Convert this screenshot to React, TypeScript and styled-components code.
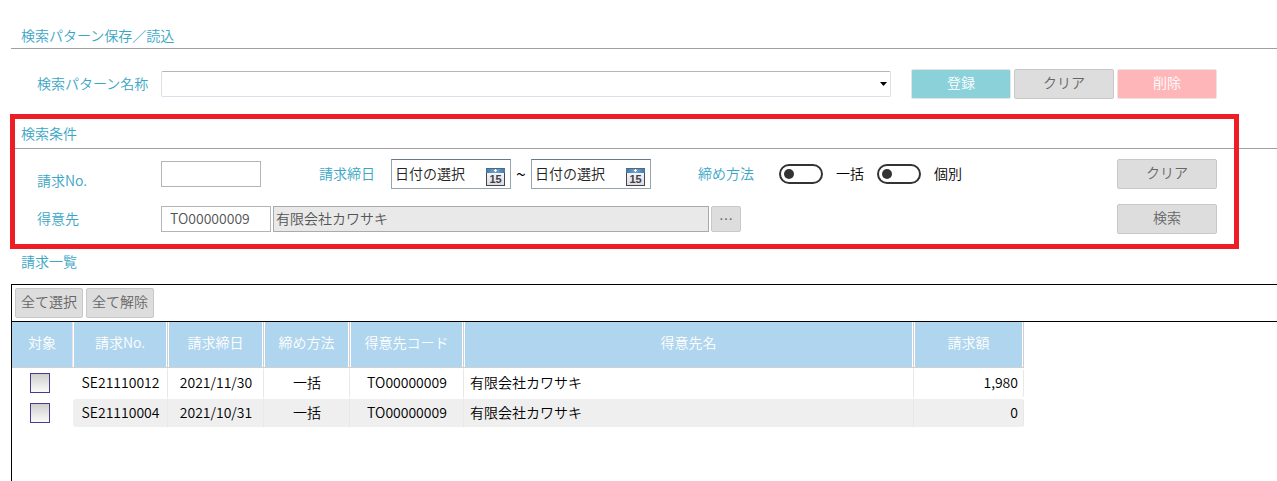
import React from "react";
import styled, { createGlobalStyle, css } from "styled-components";

const GlobalStyle = createGlobalStyle`
  *, *::before, *::after { box-sizing: border-box; }
  body {
    margin: 0;
    background: #fff;
  }
  body, button, input, select {
    font-family: "Noto Sans CJK JP", "Noto Sans", sans-serif;
    font-size: 14px;
    font-weight: 350;
  }
`;

const Page = styled.main`
  display: flex;
  flex-direction: column;
  min-height: 100vh;
  padding: 24px 0 0 11px;
  line-height: 22px;
  color: #000;
`;

const Section = styled.section`
  position: relative;
`;

const Heading = styled.h2<{ $ruled?: boolean; $roomy?: boolean }>`
  margin: 0;
  padding: 0 0 ${(p) => (p.$roomy ? 4 : 2)}px 10px;
  font-size: 14px;
  font-weight: 350;
  line-height: 22px;
  color: #3aa6c6;
  border-bottom: ${(p) => (p.$ruled ? "1px solid #a0a0a0" : "none")};
`;

const Highlight = styled.div`
  position: absolute;
  inset: -8px 38px 1px -1px;
  border: 5px solid #ee1c25;
  pointer-events: none;
`;

const FormRow = styled.div`
  display: flex;
  align-items: center;
  height: 30px;
  padding: 0 60px 0 26px;
`;

const PatternForm = styled.form`
  padding: 20px 0 23px;
`;

const SearchForm = styled.form`
  display: grid;
  gap: 15px;
  padding: 10px 0 16px;
`;

const labelText = css`
  color: #3aa6c6;
  white-space: nowrap;
  flex: none;
`;

const RowLabel = styled.label<{ $low?: boolean }>`
  ${labelText}
  width: 124px;
  padding-bottom: ${(p) => (p.$low ? 0 : 2)}px;
  line-height: 18px;
  align-self: ${(p) => (p.$low ? "flex-end" : "center")};
`;

const GroupLabel = styled.span<{ $width: number }>`
  ${labelText}
  width: ${(p) => p.$width}px;
  padding-bottom: 2px;
`;

const Group = styled.div<{ $before: number }>`
  display: flex;
  align-items: center;
  margin-left: ${(p) => p.$before}px;
`;

const SelectBox = styled.div`
  position: relative;
  flex: 1;
  height: 26px;
  margin-right: 20px;

  svg {
    position: absolute;
    right: 4px;
    top: 11px;
    pointer-events: none;
  }
`;

const Select = styled.select`
  display: block;
  width: 100%;
  height: 26px;
  padding: 0 24px 0 6px;
  appearance: none;
  background: #fff;
  border: 1px solid #dcdfe8;
  border-top-color: #b4b4bc;
  border-radius: 2px;
`;

const TextInput = styled.input<{ $width?: number }>`
  flex: ${(p) => (p.$width ? "none" : "1 1 0")};
  width: ${(p) => p.$width ?? 100}px;
  min-width: 0;
  height: 26px;
  padding: 0 8px 2px;
  color: #555;
  background: #fff;
  border: 1px solid #b4b4b4;

  &:read-only {
    max-width: 436px;
    padding: 0 2px 2px;
    background: #e9e9e9;
    border-color: #a9a9b0;
  }
`;

type Tone = "gray" | "teal" | "pink";

const tones: Record<Tone, [string, string, string]> = {
  gray: ["#dddddd", "#c8c8c8", "#666"],
  teal: ["#8bd1da", "#dfe6e8", "#fff"],
  pink: ["#ffb6b8", "#ece4e4", "#fff"],
};

const Button = styled.button<{ $tone?: Tone; $width?: number; $height?: number }>`
  flex: none;
  width: ${(p) => p.$width ?? 100}px;
  height: ${(p) => p.$height ?? 30}px;
  padding: 0 0 4px;
  line-height: 22px;
  white-space: nowrap;
  background: ${(p) => tones[p.$tone ?? "gray"][0]};
  border: 1px solid ${(p) => tones[p.$tone ?? "gray"][1]};
  border-radius: 2px;
  color: ${(p) => tones[p.$tone ?? "gray"][2]};
`;

const ButtonGroup = styled.div`
  display: flex;
  gap: 3px;
  margin-left: auto;
`;

const Fields = styled.div`
  display: flex;
  flex: 1;
  gap: 2px;
`;

const DateBox = styled.div`
  display: flex;
  align-items: center;
  width: 120px;
  height: 30px;
  padding: 0 5px 0 3px;
  border: 1px solid #96a4b0;
  border-top-color: #66788a;
`;

const DateInput = styled.input`
  flex: 1;
  min-width: 0;
  padding: 0 0 2px;
  border: 0;
  outline: 0;
  background: none;
  color: #222;

  &::placeholder {
    color: #222;
    opacity: 1;
  }
`;

const IconButton = styled.button`
  display: flex;
  padding: 6px 0 0;
  border: 0;
  background: none;
`;

const Tilde = styled.span`
  width: 20px;
  padding-bottom: 2px;
  font-size: 18px;
  text-align: center;
`;

const Switch = styled.label`
  display: flex;
  align-items: center;
  gap: 13px;
  margin-right: 13px;
`;

const SwitchText = styled.span`
  padding-bottom: 2px;
`;

const SwitchInput = styled.input`
  appearance: none;
  width: 44px;
  height: 20px;
  margin: 0;
  padding: 3px;
  border: 2px solid #333;
  border-radius: 10px;

  &::before {
    content: "";
    display: block;
    width: 10px;
    height: 10px;
    border-radius: 50%;
    background: #333;
  }

  &:checked::before {
    margin-left: auto;
  }
`;

const ListPanel = styled.div`
  flex: 1;
  margin-top: 10px;
  border: solid #000;
  border-width: 1px 0 0 1px;
`;

const Toolbar = styled.div`
  display: flex;
  gap: 3px;
  padding: 3px;
  border-bottom: 1px solid #000;
`;

const Table = styled.table`
  width: 1012px;
  table-layout: fixed;
  border-collapse: separate;
  border-spacing: 0;
`;

const HeadCell = styled.th`
  height: 46px;
  padding: 0 0 5px;
  font-weight: 350;
  color: #fff;
  background: #b0d5ee;
  border: solid #d0d0d0;
  border-width: 0 1px 1px 0;
  box-shadow: inset 1px 0 #fff, inset -1px 0 #fff;

  &:first-child {
    border-right-color: #e4e4e8;
    box-shadow: none;
  }
`;

const Cell = styled.td<{ $align?: "left" | "right" }>`
  height: 30px;
  padding: 0 5px 2px 6px;
  text-align: ${(p) => p.$align ?? "center"};
  border: solid transparent;
  border-width: 1px 1px 1px 0;
  border-right-color: #e8e8e8;
  background-clip: padding-box;

  &:first-child {
    padding: 0 5px 0 0;
    border-right-color: transparent;
  }
`;

const Row = styled.tr`
  &:nth-child(even) ${Cell}:not(:first-child) {
    background-color: #efefef;
  }
  ${Cell}:nth-child(2) {
    border-radius: 4px 0 0 4px;
  }
  ${Cell}:last-child {
    border-radius: 0 4px 4px 0;
  }
`;

const CheckBox = styled.input`
  display: block;
  appearance: none;
  width: 20px;
  height: 20px;
  margin: 0 auto;
  border: 1px solid #443c8c;
  background: linear-gradient(#cfcfcf, #fafafa);

  &:checked {
    background: #443c8c;
  }
`;

function CalendarIcon() {
  return (
    <svg width="19" height="18" viewBox="0 0 19 18" aria-hidden="true">
      <defs>
        <linearGradient id="calPage" x1="0" y1="0" x2="0" y2="1">
          <stop offset="0" stopColor="#ffffff" />
          <stop offset="1" stopColor="#dcdce0" />
        </linearGradient>
        <linearGradient id="calTop" x1="0" y1="0" x2="1" y2="0">
          <stop offset="0" stopColor="#3f78ae" />
          <stop offset="0.5" stopColor="#6fa6d6" />
          <stop offset="1" stopColor="#3f78ae" />
        </linearGradient>
      </defs>
      <rect x="0.5" y="0.5" width="18" height="17" fill="url(#calPage)" stroke="#45454d" />
      <rect x="0" y="0" width="19" height="5" fill="url(#calTop)" />
      <path d="M0 .5h19" stroke="#5c6470" />
      <path d="M9.5 1v3M8 2.5h3" stroke="#fff" />
      <text
        x="9.5"
        y="15"
        textAnchor="middle"
        fontFamily="Liberation Sans, sans-serif"
        fontSize="11"
        fontWeight="700"
        fill="#40404a"
      >
        15
      </text>
    </svg>
  );
}

function DateField({ label }: { label: string }) {
  return (
    <DateBox>
      <DateInput type="text" placeholder="日付の選択" aria-label={label} />
      <IconButton type="button" aria-label={label}>
        <CalendarIcon />
      </IconButton>
    </DateBox>
  );
}

const columns = [
  { title: "対象", width: 61 },
  { title: "請求No.", width: 95 },
  { title: "請求締日", width: 96 },
  { title: "締め方法", width: 86 },
  { title: "得意先コード", width: 114 },
  { title: "得意先名", width: 450 },
  { title: "請求額", width: 110 },
];

const invoices = [
  { no: "SE21110012", date: "2021/11/30", method: "一括", code: "TO00000009", name: "有限会社カワサキ", amount: "1,980" },
  { no: "SE21110004", date: "2021/10/31", method: "一括", code: "TO00000009", name: "有限会社カワサキ", amount: "0" },
];

export default function App() {
  return (
    <>
      <GlobalStyle />
      <Page>
        <Section>
          <Heading $ruled>検索パターン保存／読込</Heading>
          <PatternForm>
            <FormRow>
              <RowLabel htmlFor="pattern">検索パターン名称</RowLabel>
              <SelectBox>
                <Select id="pattern" />
                <svg width="7" height="4" viewBox="0 0 7 4" aria-hidden="true">
                  <path d="M0 0h7L3.5 4z" fill="#000" />
                </svg>
              </SelectBox>
              <ButtonGroup>
                <Button type="button" $tone="teal">登録</Button>
                <Button type="button">クリア</Button>
                <Button type="button" $tone="pink">削除</Button>
              </ButtonGroup>
            </FormRow>
          </PatternForm>
        </Section>

        <Section>
          <Heading $ruled $roomy>検索条件</Heading>
          <SearchForm>
            <FormRow>
              <RowLabel htmlFor="invoiceNo" $low>請求No.</RowLabel>
              <TextInput id="invoiceNo" type="text" $width={100} />
              <Group $before={58}>
                <GroupLabel $width={72}>請求締日</GroupLabel>
                <DateField label="請求締日 開始" />
                <Tilde>~</Tilde>
                <DateField label="請求締日 終了" />
              </Group>
              <Group $before={47}>
                <GroupLabel $width={81}>締め方法</GroupLabel>
                <Switch>
                  <SwitchInput type="checkbox" />
                  <SwitchText>一括</SwitchText>
                </Switch>
                <Switch>
                  <SwitchInput type="checkbox" />
                  <SwitchText>個別</SwitchText>
                </Switch>
              </Group>
              <ButtonGroup>
                <Button type="reset">クリア</Button>
              </ButtonGroup>
            </FormRow>
            <FormRow>
              <RowLabel htmlFor="customer">得意先</RowLabel>
              <Fields>
                <TextInput id="customer" type="text" defaultValue="TO00000009" $width={110} />
                <TextInput type="text" value="有限会社カワサキ" aria-label="得意先名" readOnly />
                <Button type="button" $width={30} $height={26}>…</Button>
              </Fields>
              <Button type="button">検索</Button>
            </FormRow>
          </SearchForm>
          <Highlight />
        </Section>

        <Heading>請求一覧</Heading>
        <ListPanel>
          <Toolbar>
            <Button type="button" $width={68}>全て選択</Button>
            <Button type="button" $width={68}>全て解除</Button>
          </Toolbar>
          <Table>
            <colgroup>
              {columns.map((c) => (
                <col key={c.title} width={c.width} />
              ))}
            </colgroup>
            <thead>
              <tr>
                {columns.map((c) => (
                  <HeadCell key={c.title} scope="col">{c.title}</HeadCell>
                ))}
              </tr>
            </thead>
            <tbody>
              {invoices.map((r) => (
                <Row key={r.no}>
                  <Cell>
                    <CheckBox type="checkbox" aria-label={r.no} />
                  </Cell>
                  <Cell>{r.no}</Cell>
                  <Cell>{r.date}</Cell>
                  <Cell>{r.method}</Cell>
                  <Cell>{r.code}</Cell>
                  <Cell $align="left">{r.name}</Cell>
                  <Cell $align="right">{r.amount}</Cell>
                </Row>
              ))}
            </tbody>
          </Table>
        </ListPanel>
      </Page>
    </>
  );
}
